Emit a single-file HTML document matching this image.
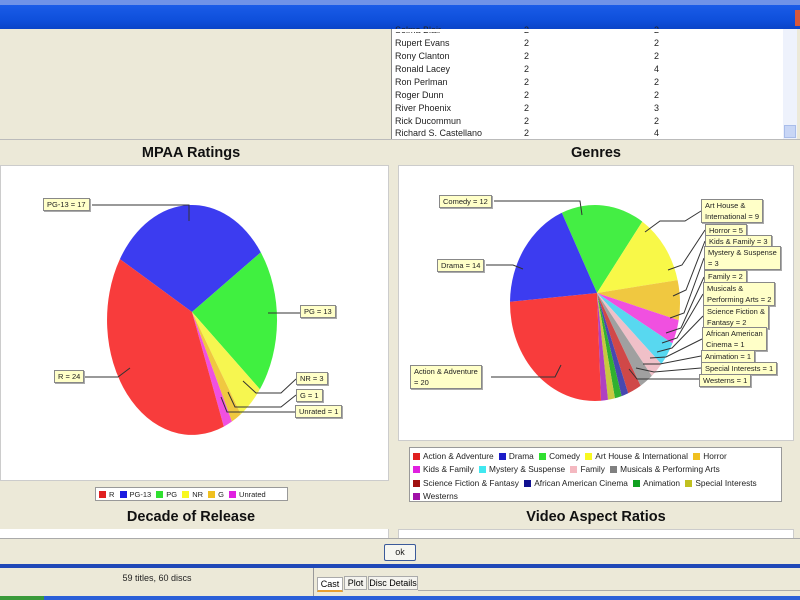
<!DOCTYPE html>
<html><head><meta charset="utf-8">
<style>
*{margin:0;padding:0;box-sizing:border-box}
body{width:800px;height:600px;overflow:hidden;background:#ece9d8;position:relative;font-family:"Liberation Sans",sans-serif}
.abs{position:absolute}
.row{position:absolute;left:395px;font-size:9px;color:#222;height:13px;line-height:13px;width:390px}
.row span{position:absolute}
.t{position:absolute;font-weight:bold;font-size:14.5px;color:#111;text-align:center}
.lb{position:absolute;background:#ffffc8;border:1px solid #888;box-shadow:1px 1px 0 #aaa;font-size:7.5px;line-height:11px;padding:0 3px;color:#222;white-space:nowrap}
.lg{font-size:7.5px;color:#222;position:absolute;white-space:nowrap}
.sw{display:inline-block;width:7px;height:7px;margin:0 3px 0 3px;vertical-align:-1px}
</style></head><body>
<div class="abs" style="left:0;top:0;width:800px;height:5px;background:#6f93e8"></div>
<div class="abs" style="left:0;top:5px;width:800px;height:24px;background:linear-gradient(#1a5ce8,#0f50dc 60%,#0a44c8)"></div>
<div class="abs" style="left:795px;top:10px;width:5px;height:16px;background:#d8583a"></div>
<div class="abs" style="left:391px;top:29px;width:406px;height:111px;background:#fff;border-left:1px solid #888;border-bottom:1px solid #aaa;overflow:hidden"></div>
<div class="abs" style="left:783px;top:29px;width:14px;height:110px;background:#eef2fc"></div>
<div class="abs" style="left:784px;top:125px;width:12px;height:13px;background:#c8d6f6;border:1px solid #a9bdea"></div>
<div class="row" style="top:24px"><span>Selma Blair</span><span style="left:129px">2</span><span style="left:259px">2</span></div>
<div class="abs" style="left:392px;top:29px;width:390px;height:3px;background:#fff"></div>
<div class="row" style="top:37px"><span>Rupert Evans</span><span style="left:129px">2</span><span style="left:259px">2</span></div>
<div class="row" style="top:50px"><span>Rony Clanton</span><span style="left:129px">2</span><span style="left:259px">2</span></div>
<div class="row" style="top:63px"><span>Ronald Lacey</span><span style="left:129px">2</span><span style="left:259px">4</span></div>
<div class="row" style="top:76px"><span>Ron Perlman</span><span style="left:129px">2</span><span style="left:259px">2</span></div>
<div class="row" style="top:89px"><span>Roger Dunn</span><span style="left:129px">2</span><span style="left:259px">2</span></div>
<div class="row" style="top:102px"><span>River Phoenix</span><span style="left:129px">2</span><span style="left:259px">3</span></div>
<div class="row" style="top:115px"><span>Rick Ducommun</span><span style="left:129px">2</span><span style="left:259px">2</span></div>
<div class="row" style="top:127px"><span>Richard S. Castellano</span><span style="left:129px">2</span><span style="left:259px">4</span></div>
<div class="abs" style="left:0;top:139px;width:800px;height:1px;background:#bbb"></div>

<div class="t" style="left:0;width:382px;top:145px">MPAA Ratings</div>
<div class="t" style="left:400px;width:392px;top:145px">Genres</div>
<div class="abs" style="left:0;top:165px;width:389px;height:316px;background:#fff;border:1px solid #ccc"></div>
<div class="abs" style="left:398px;top:165px;width:396px;height:276px;background:#fff;border:1px solid #ccc"></div>

<svg class="abs" style="left:0;top:0" width="800" height="600" id="sv">
<g id="pies"></g>
<g stroke="#333" stroke-width="1" fill="none">
<polyline points="92,205 189,205 189,221"/>
<polyline points="268,313 300,313"/>
<polyline points="84,377 118,377 130,368"/>
<polyline points="243,381 256,393 281,393 296,379"/>
<polyline points="228,392 235,407 281,407 296,395"/>
<polyline points="221,397 227,412 295,412"/>
<polyline points="494,201 580,201 582,215"/>
<polyline points="486,265 513,265 523,269"/>
<polyline points="491,377 555,377 561,365"/>
<polyline points="645,232 660,221 685,221 701,211"/>
<polyline points="668,270 682,265 705,230"/>
<polyline points="673,296 686,290 705,241"/>
<polyline points="670,318 684,313 704,258"/>
<polyline points="666,333 681,328 704,277"/>
<polyline points="662,343 677,338 703,294"/>
<polyline points="657,352 672,348 703,316"/>
<polyline points="650,358 666,357 702,339"/>
<polyline points="643,364 660,364 701,356"/>
<polyline points="636,368 654,372 701,368"/>
<polyline points="629,369 637,379 699,379"/>
</g>
</svg>

<div class="lb" style="left:43px;top:198px">PG-13 = 17</div>
<div class="lb" style="left:300px;top:305px">PG = 13</div>
<div class="lb" style="left:54px;top:370px">R = 24</div>
<div class="lb" style="left:296px;top:372px">NR = 3</div>
<div class="lb" style="left:296px;top:389px">G = 1</div>
<div class="lb" style="left:295px;top:405px">Unrated = 1</div>

<div class="lb" style="left:439px;top:195px">Comedy = 12</div>
<div class="lb" style="left:437px;top:259px">Drama = 14</div>
<div class="lb" style="left:410px;top:365px">Action &amp; Adventure<br>= 20</div>
<div class="lb" style="left:701px;top:199px">Art House &amp;<br>International = 9</div>
<div class="lb" style="left:705px;top:224px">Horror = 5</div>
<div class="lb" style="left:705px;top:235px">Kids &amp; Family = 3</div>
<div class="lb" style="left:704px;top:246px">Mystery &amp; Suspense<br>= 3</div>
<div class="lb" style="left:704px;top:270px">Family = 2</div>
<div class="lb" style="left:703px;top:282px">Musicals &amp;<br>Performing Arts = 2</div>
<div class="lb" style="left:703px;top:305px">Science Fiction &amp;<br>Fantasy = 2</div>
<div class="lb" style="left:702px;top:327px">African American<br>Cinema = 1</div>
<div class="lb" style="left:701px;top:350px">Animation = 1</div>
<div class="lb" style="left:701px;top:362px">Special Interests = 1</div>
<div class="lb" style="left:699px;top:374px">Westerns = 1</div>

<div class="abs" style="left:95px;top:487px;width:193px;height:14px;background:#fff;border:1px solid #999"></div>
<div class="lg" style="left:96px;top:490px"><span class="sw" style="background:#e02020"></span>R <span class="sw" style="background:#1c1ce0"></span>PG-13 <span class="sw" style="background:#30e030"></span>PG <span class="sw" style="background:#f8f820"></span>NR <span class="sw" style="background:#f0c020"></span>G <span class="sw" style="background:#e020e0"></span>Unrated</div>
<div class="abs" style="left:409px;top:447px;width:373px;height:55px;background:#fff;border:1px solid #999"></div>
<div class="lg" style="left:410px;top:450px;line-height:13.3px;font-size:8.3px">
<span class="sw" style="background:#e02020"></span>Action &amp; Adventure <span class="sw" style="background:#1c1cc8"></span>Drama <span class="sw" style="background:#30e030"></span>Comedy <span class="sw" style="background:#f8f820"></span>Art House &amp; International <span class="sw" style="background:#f0c020"></span>Horror<br>
<span class="sw" style="background:#e020e0"></span>Kids &amp; Family <span class="sw" style="background:#40e8f0"></span>Mystery &amp; Suspense <span class="sw" style="background:#f4b8c0"></span>Family <span class="sw" style="background:#808080"></span>Musicals &amp; Performing Arts<br>
<span class="sw" style="background:#a01010"></span>Science Fiction &amp; Fantasy <span class="sw" style="background:#101090"></span>African American Cinema <span class="sw" style="background:#10a020"></span>Animation <span class="sw" style="background:#c0c020"></span>Special Interests<br>
<span class="sw" style="background:#a010a8"></span>Westerns</div>

<div class="t" style="left:0;width:382px;top:509px">Decade of Release</div>
<div class="t" style="left:400px;width:392px;top:509px">Video Aspect Ratios</div>
<div class="abs" style="left:0;top:529px;width:389px;height:9px;background:#fff;border-right:1px solid #ccc"></div>
<div class="abs" style="left:398px;top:529px;width:396px;height:9px;background:#fff;border:1px solid #ccc;border-bottom:none"></div>
<div class="abs" style="left:0;top:538px;width:800px;height:1px;background:#aaa"></div>
<div class="abs" style="left:384px;top:544px;width:32px;height:17px;background:#f6f6f0;border:1px solid #3b5a9a;border-radius:2px;font-size:9px;text-align:center;line-height:15px;color:#222">ok</div>
<div class="abs" style="left:0;top:564px;width:800px;height:4px;background:#1f48b8"></div>
<div class="abs" style="left:0;top:568px;width:800px;height:28px;background:#ece9d8"></div>
<div class="abs" style="left:0;top:573px;width:314px;font-size:9px;text-align:center;color:#222">59 titles, 60 discs</div>
<div class="abs" style="left:313px;top:568px;width:1px;height:28px;background:#999"></div>
<div class="abs" style="left:317px;top:577px;width:26px;height:15px;background:#fff;border:1px solid #aaa;border-bottom:2px solid #e8a030;font-size:9px;text-align:center;line-height:13px">Cast</div>
<div class="abs" style="left:344px;top:576px;width:23px;height:14px;background:#f4f3ee;border:1px solid #aaa;font-size:9px;text-align:center;line-height:12px">Plot</div>
<div class="abs" style="left:368px;top:576px;width:50px;height:14px;background:#f4f3ee;border:1px solid #aaa;font-size:9px;text-align:center;line-height:12px">Disc Details</div>
<div class="abs" style="left:418px;top:590px;width:382px;height:1px;background:#aaa"></div>
<div class="abs" style="left:0;top:596px;width:800px;height:4px;background:#2a5fd8"></div>
<div class="abs" style="left:0;top:596px;width:44px;height:4px;background:#3a9a3a"></div>

<script>
function pie(ax,ay,cx,cy,rx,ry,slices){
 var g=document.getElementById('pies'),s='';
 slices.forEach(function(sl){
  var a1=sl[0]*Math.PI/180,a2=sl[1]*Math.PI/180;
  var x1=cx+rx*Math.cos(a1),y1=cy+ry*Math.sin(a1),x2=cx+rx*Math.cos(a2),y2=cy+ry*Math.sin(a2);
  var lg=(sl[1]-sl[0])>180?1:0;
  s+='<path d="M'+ax+','+ay+' L'+x1.toFixed(1)+','+y1.toFixed(1)+' A'+rx+','+ry+' 0 '+lg+' 1 '+x2.toFixed(1)+','+y2.toFixed(1)+' Z" fill="'+sl[2]+'"/>';
 });
 g.innerHTML+=s;
}
pie(192,312,192,320,85,115,[
 [-148,-36,'#3c3cf0'],[-36,37,'#40f040'],[37,55,'#f6f650'],[55,62,'#f0c840'],[62,68,'#f050e0'],[68,212,'#f83c3c']
]);
var u=360/76,a=-113,gs=[[12,'#44ee44'],[9,'#f8f848'],[5,'#f0c840'],[3,'#f050e0'],[3,'#58d8f0'],[2,'#f0c0c8'],[2,'#a0a0a0'],[2,'#d04848'],[1,'#4848b0'],[1,'#30b030'],[1,'#c8c840'],[1,'#b040c0'],[20,'#f83c3c'],[14,'#3c3cf0']],sl=[];
gs.forEach(function(x){sl.push([a,a+x[0]*u,x[1]]);a+=x[0]*u;});
pie(597,293,595,303,85,98,sl);
</script>
</body></html>
